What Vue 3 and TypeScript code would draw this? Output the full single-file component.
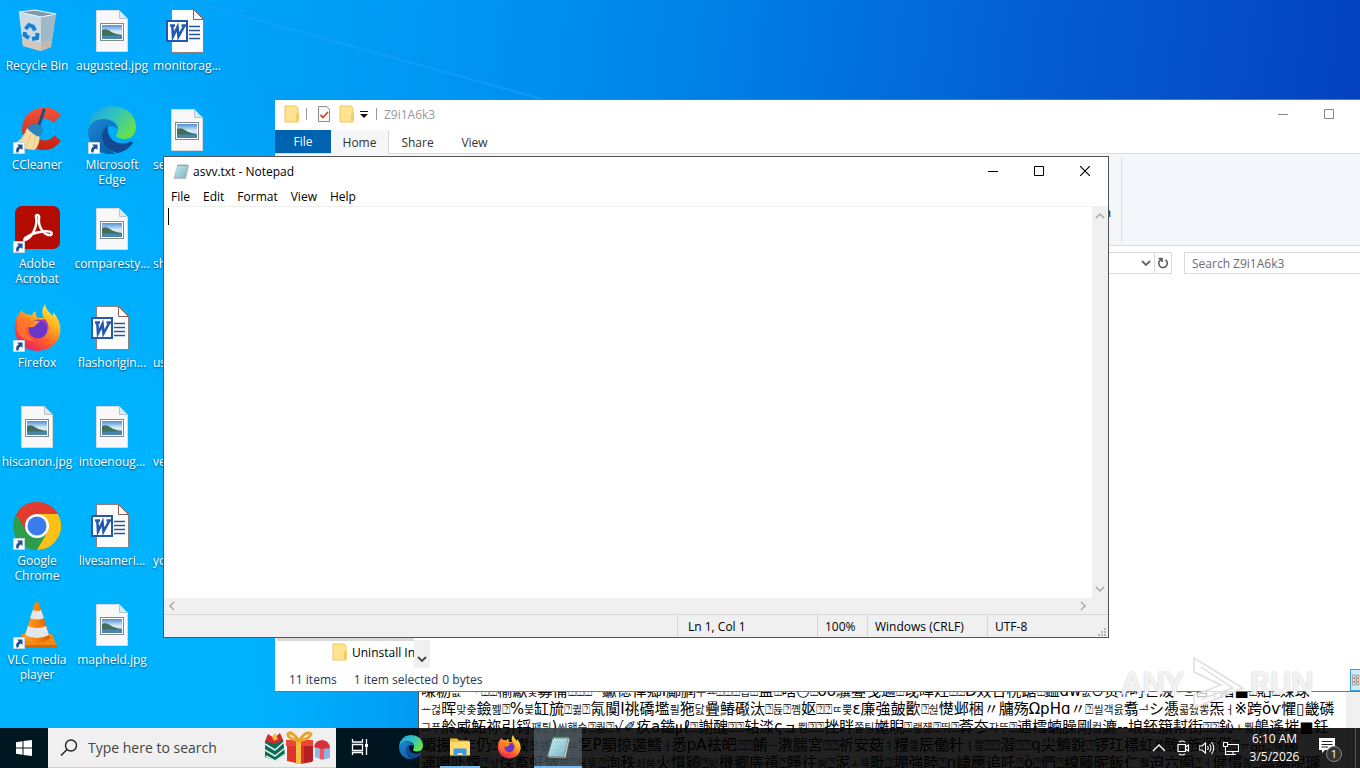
<script setup lang="ts">
import { ref } from 'vue'

interface Shortcut {
  label: string
  icon: string
  link?: boolean
  start?: boolean
}

const columns: Shortcut[][] = [
  [
    { label: 'Recycle Bin', icon: 'bin' },
    { label: 'CCleaner', icon: 'ccleaner', link: true },
    { label: 'Adobe Acrobat', icon: 'acrobat', link: true },
    { label: 'Firefox', icon: 'firefox', link: true },
    { label: 'hiscanon.jpg', icon: 'jpg' },
    { label: 'Google Chrome', icon: 'chrome', link: true },
    { label: 'VLC media player', icon: 'vlc', link: true },
  ],
  [
    { label: 'augusted.jpg', icon: 'jpg' },
    { label: 'Microsoft Edge', icon: 'edge', link: true },
    { label: 'comparesty...', icon: 'jpg' },
    { label: 'flashorigin...', icon: 'word' },
    { label: 'intoenoug...', icon: 'jpg' },
    { label: 'livesameri...', icon: 'word' },
    { label: 'mapheld.jpg', icon: 'jpg' },
  ],
  [
    { label: 'monitorag...', icon: 'word' },
    { label: 'se', icon: 'jpg', start: true },
    { label: 'sh', icon: '', start: true },
    { label: 'us', icon: '', start: true },
    { label: 've', icon: '', start: true },
    { label: 'yo', icon: '', start: true },
  ],
]

const lines: string[] = [
  '嗛粝럾ᄂㆍ⍰⍰櫤獻뭊募備⍰⍰⍰ᅡ钀憁律鄉I鄺膶쑤ㅛ⍰⍰⍰촙⍰盍⍰啥○⍰oo驥㬪戋邇⍰戉晫炷⍰⍰D效㕣梲踞⍰鎰ɑw쭚⊖贡쓔呵芒冹ㆍ으首ㅏ階■⍰貼⍰媒球',
  'ᅭ걶晖맞춪鐱쩶⍰%붗缸旈⍰큃⍰氝闃I祧礄壏픨狏닰疊鰆礟汰⍰듅⍰꼠妪⍰⍰ㄸ뿣ε廉強皷歠⍰쉲憷邺梱〃牗殇ΩpHɑ〃⍰씰객읈翥ᅺシ慿콟줤뽕炁ㅓ※跨ŏѵ懼▯畿磷',
  '그푸舲威鮖祢引锊쨰튄)씼햌슾⍰퀆⍰√✐疚a鑡㎕⍰謝醜⍰⍰轱渁ςュ뿸⍰⍰挫眫쫉팅嬔睨⍰랲쟮⍰뛰⍰葊冭쟈뚜⍰逋樰蝻臊剛컲瀌--埌鉟簱幇街⍰⍰鈊ㅗ뿳鵃遙墔■鈓',
  '嵋搌뚶乍仍⍰団搩쬬쐤⍰썟ㅛ乭P顒掠遾鱈ㅓ悉pA袪皅⍰⍰餚ㅡ漖腨宮⍰⍰祈安菇ㅕ糧쫊辰働籵ㅕ쫊⍰⍰潪⍰⍰q尖鱭銳⍰锣玒標虹쬴醜⍰旌莲僅⍰ㅠ品⍰훼娜',
  '運嗶卟慄⍰삯倸畜虷儌쬬⍰옹뚶⍰洵秩쇠쑴火懫穎⍰쐸機郷庤禧⍰睜往쑴⍰泥ㅗ뚝毗⍰堋強睦⍰n嶹應追吒⍰ò⍰們⍰線藤昵飯仁쮈迫六圇⍰ㅓ健慣쫊⍰藟畼唲瓏',
]

// Hangul and jamo fall back to a smaller face in the editor; unmapped code points show as boxes.
type Face = 'han' | 'small' | 'tofu'
function face(ch: string): Face {
  if (ch === '⍰') return 'tofu'
  return /[\u1100-\u11ff\u3130-\u318f\uac00-\ud7af]/.test(ch) ? 'small' : 'han'
}
function runs(line: string): { text: string; face: Face }[] {
  const out: { text: string; face: Face }[] = []
  for (const ch of line) {
    const f = face(ch)
    const last = out[out.length - 1]
    if (last && last.face === f) last.text += ch
    else out.push({ text: ch, face: f })
  }
  return out
}
const rendered = lines.map(runs)

const tasks = [
  { name: 'Microsoft Edge', icon: 'edge', state: '' },
  { name: 'File Explorer', icon: 'explorer', state: 'open' },
  { name: 'Firefox', icon: 'firefox', state: '' },
  { name: 'Notepad', icon: 'notepad', state: 'open active' },
]

const text = ref('')
</script>

<template>
  <svg class="defs" aria-hidden="true">
    <defs>
      <linearGradient id="g-edge1" x1="0" y1="0" x2="1" y2="0.6">
        <stop offset="0" stop-color="#1b9de2" /><stop offset=".5" stop-color="#2fc2c4" /><stop offset="1" stop-color="#66e04f" />
      </linearGradient>
      <linearGradient id="g-edge2" x1="0" y1="0" x2=".7" y2="1">
        <stop offset="0" stop-color="#1a8bd8" /><stop offset="1" stop-color="#0c59a4" />
      </linearGradient>
      <linearGradient id="g-fox" x1=".85" y1="0" x2=".2" y2="1">
        <stop offset="0" stop-color="#fff04a" /><stop offset=".35" stop-color="#ffb01f" /><stop offset=".65" stop-color="#ff5a2c" /><stop offset="1" stop-color="#e3176e" />
      </linearGradient>
      <linearGradient id="g-sky" x1="0" y1="0" x2="0" y2="1">
        <stop offset="0" stop-color="#4f8fd8" /><stop offset=".5" stop-color="#dceef6" /><stop offset="1" stop-color="#8fbbd0" />
      </linearGradient>
      <linearGradient id="g-bin" x1="0" y1="0" x2="1" y2="1">
        <stop offset="0" stop-color="#dcebf3" /><stop offset="1" stop-color="#9fbccd" />
      </linearGradient>
      <linearGradient id="g-cone" x1="0" y1="0" x2="1" y2="0">
        <stop offset="0" stop-color="#ffa22e" /><stop offset=".5" stop-color="#f98209" /><stop offset="1" stop-color="#d75c00" />
      </linearGradient>
      <linearGradient id="g-pad" x1="0" y1="0" x2="1" y2="1">
        <stop offset="0" stop-color="#d6f1f4" /><stop offset="1" stop-color="#6fb3c4" />
      </linearGradient>
      <linearGradient id="g-cc" x1="0" y1="0" x2="0" y2="1">
        <stop offset="0" stop-color="#f0553d" /><stop offset="1" stop-color="#c5200f" />
      </linearGradient>
    </defs>
    <symbol id="i-bin" viewBox="0 0 48 48">
      <path d="M6 5 43 7 38 40 28 44 10 39z" fill="url(#g-bin)" />
      <path d="M6 5 28 10 28 44 10 39z" fill="#c9dbe5" />
      <path d="M28 10 43 7 38 40 28 44z" fill="#a0b9c9" />
      <path d="M9 31 28 36 39 32 38 40 28 44 10 39z" fill="#d9b9a2" opacity=".6" />
      <path d="M6 5 22 3 43 7 28 10z" fill="#7f9bad" stroke="#eff6fa" stroke-width="1.200" />
      <g fill="none" stroke="#1c7fd6" stroke-width="4">
        <path d="M12.500 22 16 18l4 1.500 2 4" /><path d="M24.500 26l-.5 5-5 1" /><path d="M16 31l-4.500-3 .5-3" />
      </g>
    </symbol>
    <symbol id="i-jpg" viewBox="0 0 48 48">
      <path d="M8.500 3.500H31.500L39.500 11.500V44.500H8.500z" fill="#f8f8f8" stroke="#d5d9dc" />
      <path d="M31.500 3.500V11.500H39.500z" fill="#d9ecf6" stroke="#b7c4cc" />
      <rect x="12.500" y="16.500" width="23" height="17" fill="#fff" stroke="#7f8a91" />
      <rect x="14" y="18" width="20" height="14" fill="url(#g-sky)" />
      <path d="M14 23q4-2 8 1t12 4v1H14z" fill="#3f6f5a" />
      <path d="M14 28.500h20v3.500H14z" fill="#4a86ac" />
    </symbol>
    <symbol id="i-word" viewBox="0 0 48 48">
      <path d="M8.500 2.500H31.500L40.500 12.500V45.500H8.500z" fill="#fcfcfc" stroke="#8e7f7c" />
      <path d="M30.500 2.500V12.500H40.500z" fill="#fff" stroke="#8e5a52" />
      <path d="M26 19.500H37M26 23.500H37M26 27.500H37M26 31.500H37" stroke="#2b579a" stroke-width="1.400" />
      <rect x="4" y="14" width="20" height="20" fill="#fff" stroke="#2259b0" stroke-width="2" />
      <path d="M7 18.500H12M9.300 18.500 10 29.500 14.500 20 15.500 29.500 21.500 18.500M18.500 18.500H23" fill="none" stroke="#2259b0" stroke-width="2.600" />
    </symbol>
    <symbol id="i-ccleaner" viewBox="0 0 48 48">
      <path d="M48 9 41 17Q31 8 25 17 19 30 29 34 37 36 41 29L48 35Q40 45 29 44 12 42 9 25 9 6 26 2 39-1 48 9z" fill="url(#g-cc)" />
      <path d="M31 4 25 22" stroke="#1f4c79" stroke-width="3" stroke-linecap="round" />
      <path d="M14 22Q19 27 27 29 26 42 21 44 8 43 1 38 10 33 14 22z" fill="#f7dda4" />
      <path d="M14 25 6 38M18 28 13 41M23 29 20 43" stroke="#e3c084" />
      <path d="M14 22Q20 15 29 20 31 25 27 31 20 29 14 22z" fill="#2c82bf" />
    </symbol>
    <symbol id="i-edge" viewBox="0 0 48 48">
      <path d="M0 23Q2 2 23 0 46 1 48 20 48 32 37 33 28 33 28 29 33 22 27 16 18 10 8 15 3 18 0 23z" fill="url(#g-edge1)" />
      <path d="M0 24Q2 14 14 13 27 13 30 24 28 20 22 20 14 22 14 31 16 43 28 48 12 50 4 38 0 32 0 24z" fill="url(#g-edge2)" />
      <path d="M20 20Q13 24 14 32 17 45 30 47 39 45 45 37 44 34 39 37 27 39 22 31 19 26 20 20z" fill="#114a91" />
    </symbol>
    <symbol id="i-acrobat" viewBox="0 0 48 48">
      <rect x="2" y="1" width="45" height="43" rx="7" fill="#b30b00" />
      <path d="M12 35C19 33 25 21 23 12 22 9 27 9 26 14 25 24 33 31 38 30 41 27 35 25 27 27 20 28 15 31 12 33 11 35 11 36 12 35z" fill="none" stroke="#fff" stroke-width="2.400" />
    </symbol>
    <symbol id="i-firefox" viewBox="0 0 48 48">
      <path d="M4 12Q8 9 8 6 12 11 19 11 20 8 23 7 22 12 25 14H31Q27 7 32 0 33 6 40 12 40 9 40 8 49 18 47 29 44 45 25 47 6 46 2 29 1 19 4 12z" fill="url(#g-fox)" />
      <circle cx="25" cy="25" r="9.500" fill="#6b35c9" />
      <path d="M15 21Q18 15 27 17 24 20 22 22 17 25 15 21z" fill="#ff9329" />
      <path d="M4 13Q12 12 22 19 18 24 12 23 14 33 22 37 8 37 4 26z" fill="#ff7a2e" opacity=".75" />
      <path d="M26 16Q34 18 35 27 37 21 32 15z" fill="#b13bbd" />
    </symbol>
    <symbol id="i-chrome" viewBox="0 0 48 48">
      <circle cx="24" cy="24" r="24" fill="#2c9e4b" />
      <path d="M24 24 3.200 12A24 24 0 0 1 44.800 12z" fill="#e33b2e" />
      <path d="M24 12H44.800A24 24 0 0 1 24 48L34.400 30z" fill="#fbc116" />
      <path d="M3.200 12 13.600 30 24 24V12z" fill="#e33b2e" />
      <circle cx="24" cy="24" r="12" fill="#fff" /><circle cx="24" cy="24" r="9.500" fill="#3b7cec" />
    </symbol>
    <symbol id="i-vlc" viewBox="0 0 48 48">
      <path d="M9 33H39L44 45H4z" fill="#f18a14" /><path d="M4 44H44V47H4z" fill="#d46a05" />
      <path d="M22 2Q24 0 26 2L37 37Q31 42 24 42T11 37z" fill="url(#g-cone)" />
      <path d="M20 9Q24 11 28 9L31 17Q24 20 17 17zM15 25Q24 29 33 25L36 34Q24 40 12 34z" fill="#e4e7e8" />
    </symbol>
    <symbol id="i-explorer" viewBox="0 0 48 48">
      <path d="M4 7H18L22 11H43V40H4z" fill="#f4bc36" /><path d="M4 14H44V41H4z" fill="#ffdb70" />
      <path d="M11 27H37V42H29V36H19V42H11z" fill="#3b9ce5" />
    </symbol>
    <symbol id="i-notepad" viewBox="0 0 48 48">
      <path d="M14 5H45L36 43H3z" fill="url(#g-pad)" stroke="#4f7f8b" />
      <path d="M36 43 45 5 47 8 39 45H8L3 43z" fill="#e9e4d2" stroke="#77817e" />
      <path d="M15 3v5M20 3v5M25 3v5M30 3v5M35 3v5M40 3v5" stroke="#485" stroke-width="2" />
      <path d="M14 15H39M12 22H37M11 29H36" stroke="#8fcbd4" />
    </symbol>
    <symbol id="i-folder" viewBox="0 0 16 18">
      <path d="M1 1H12L14 3V17H1z" fill="#ffe391" stroke="#efc85c" /><path d="M12 17V9L15 8V15z" fill="#f3cd62" />
    </symbol>
  </svg>

  <main class="desktop">
    <svg class="ray" viewBox="0 0 560 104" aria-hidden="true"><path d="M200 4 560 104" stroke="#1ba2fb" stroke-width="2" opacity=".6" /></svg>

    <section class="shortcuts" aria-label="Desktop">
      <div v-for="(col, c) in columns" :key="c" class="column">
        <a v-for="item in col" :key="item.label" class="shortcut" :class="{ start: item.start }" href="#">
          <span class="art">
            <svg v-if="item.icon" class="big"><use :href="'#i-' + item.icon" /></svg>
            <svg v-if="item.link" class="arrow" viewBox="0 0 12 12">
              <path d="M.5.5H11.500V11.500H.5z" fill="#fff" stroke="#c5d6e2" />
              <path d="M4 2.500H9.500V8L8 6.500Q5.500 7 5.500 10.500H3.500Q2 6.500 5.800 4.300z" fill="#1d4f91" />
            </svg>
          </span>
          <span class="name">{{ item.label }}</span>
        </a>
      </div>
    </section>

    <section class="window raw" aria-label="Notepad">
      <div class="page">
        <p v-for="(line, i) in rendered" :key="i">
          <span v-for="(run, j) in line" :key="j" :class="run.face">{{ run.text }}</span>
        </p>
      </div>
    </section>

    <section class="window explorer" aria-label="Z9i1A6k3">
      <header class="caption">
        <svg class="folder"><use href="#i-folder" /></svg>
        <i class="bar"></i>
        <svg class="check" viewBox="0 0 14 16"><path d="M1.500.5H9.500L12.500 3.500V15.500H1.500z" fill="#fbfbfb" stroke="#8a8a8a" /><path d="M3.500 9 6 11.500 11 6" fill="none" stroke="#d0492c" stroke-width="1.800" /></svg>
        <svg class="folder"><use href="#i-folder" /></svg>
        <svg class="drop" viewBox="0 0 8 8"><path d="M0 1.500H8" stroke="#111" /><path d="M0 4H8L4 8z" fill="#111" /></svg>
        <i class="bar"></i>
        <span class="title">Z9i1A6k3</span>
        <button aria-label="Minimize"><svg viewBox="0 0 10 10"><path d="M0 5.500H10" stroke="#888" /></svg></button>
        <button aria-label="Maximize"><svg viewBox="0 0 10 10"><path d="M.5.5H9.500V9.500H.5z" fill="none" stroke="#888" /></svg></button>
      </header>
      <nav class="tabs">
        <button class="file">File</button><button class="home">Home</button><button>Share</button><button>View</button>
      </nav>
      <div class="ribbon"><div class="group"><span>Invert selection</span></div></div>
      <div class="address">
        <div class="path">
          <button aria-label="Previous locations"><svg viewBox="0 0 10 10"><path d="M1 3 5 7 9 3" fill="none" stroke="#666" stroke-width="1.800" /></svg></button>
          <button class="refresh" aria-label="Refresh"><svg viewBox="0 0 12 12"><path d="M4 2.500A4.300 4.300 0 1 0 8.500 2.800M1.500 1.500H5V5" fill="none" stroke="#555" stroke-width="1.500" /></svg></button>
        </div>
        <input class="find" type="search" aria-label="Search Z9i1A6k3" placeholder="Search Z9i1A6k3" />
      </div>
      <div class="body">
        <div class="tree">
          <div class="strip"></div>
          <div class="node"><svg class="folder"><use href="#i-folder" /></svg><span>Uninstall Information</span></div>
        </div>
        <button class="down" aria-label="Scroll down"><svg viewBox="0 0 10 10"><path d="M1 3 5 7 9 3" fill="none" stroke="#444" stroke-width="1.800" /></svg></button>
      </div>
      <footer class="counts">
        <span>11 items</span><span>1 item selected</span><span>0 bytes</span>
        <button aria-label="Details view"><svg viewBox="0 0 10 14"><path d="M1.500 1.500H4.500V4.500H1.500zM1.500 5.500H4.500V8.500H1.500zM1.500 9.500H4.500V12.500H1.500zM6 1.500H8.500V4.500H6zM6 5.500H8.500V8.500H6zM6 9.500H8.500V12.500H6z" fill="#fff" stroke="#a08a7c" /></svg></button>
      </footer>
    </section>

    <div class="watermark" aria-label="ANY RUN">
      <span>ANY</span>
      <svg viewBox="0 0 56 56"><path d="M5 3 54 33 5 53V40L32 30 5 17z" fill="rgba(255,255,255,.75)" stroke="#dedede" stroke-width="1.500" /><path d="M12 12 44 33 12 44" fill="none" stroke="#e2e2e2" stroke-width="1.500" /></svg>
      <span>RUN</span>
    </div>

    <section class="window notepad" aria-label="asvv.txt - Notepad">
      <header class="caption">
        <svg class="pad"><use href="#i-notepad" /></svg>
        <span class="title">asvv.txt - Notepad</span>
        <button aria-label="Minimize"><svg viewBox="0 0 10 10"><path d="M0 5.500H10" stroke="#000" /></svg></button>
        <button aria-label="Maximize"><svg viewBox="0 0 10 10"><path d="M.5.5H9.500V9.500H.5z" fill="none" stroke="#000" /></svg></button>
        <button aria-label="Close"><svg viewBox="0 0 10 10"><path d="M0 0 10 10M10 0 0 10" stroke="#000" stroke-width="1.200" /></svg></button>
      </header>
      <nav class="menu">
        <button>File</button><button>Edit</button><button>Format</button><button>View</button><button>Help</button>
      </nav>
      <div class="editor">
        <textarea v-model="text" aria-label="Text editor" spellcheck="false"></textarea>
        <i class="caret"></i>
        <div class="vbar">
          <svg viewBox="0 0 10 10"><path d="M1 7 5 3 9 7" fill="none" stroke="#aaa" stroke-width="1.500" /></svg>
          <svg viewBox="0 0 10 10"><path d="M1 3 5 7 9 3" fill="none" stroke="#aaa" stroke-width="1.500" /></svg>
        </div>
      </div>
      <div class="hbar">
        <svg viewBox="0 0 10 10"><path d="M7 1 3 5 7 9" fill="none" stroke="#aaa" stroke-width="1.500" /></svg>
        <svg viewBox="0 0 10 10"><path d="M3 1 7 5 3 9" fill="none" stroke="#aaa" stroke-width="1.500" /></svg>
      </div>
      <footer class="status">
        <span class="fill"></span><span class="pos">Ln 1, Col 1</span><span class="zoom">100%</span><span class="eol">Windows (CRLF)</span><span class="enc">UTF-8</span>
        <svg class="grip" viewBox="0 0 10 10"><path d="M7 1h2v2H7zM7 4h2v2H7zM7 7h2v2H7zM4 4h2v2H4zM4 7h2v2H4zM1 7h2v2H1z" fill="#b5b5b5" /></svg>
      </footer>
    </section>

    <footer class="taskbar">
      <button class="start-btn" aria-label="Start"><svg viewBox="0 0 16 16"><path d="M0 2.200 6.500 1.300V7.500H0zM7.500 1.100 16 0V7.500H7.500zM0 8.500H6.500V14.700L0 13.800zM7.500 8.500H16V16L7.500 14.900z" fill="#fff" /></svg></button>
      <div class="search">
        <svg class="lens" viewBox="0 0 18 18"><circle cx="11" cy="6.500" r="5.500" fill="none" stroke="#222" stroke-width="1.400" /><path d="M7 10.500 1 16.500" stroke="#222" stroke-width="1.400" /></svg>
        <input type="text" aria-label="Type here to search" placeholder="Type here to search" />
        <svg class="gifts" viewBox="0 0 68 34" aria-hidden="true">
          <path d="M2 10 20 8 22 24 12 30 2 26z" fill="#0d6b58" />
          <path d="M2 13 12 19 21 11M2 19 12 25 22 17M3 25 12 30 22 23" stroke="#d8f1e4" stroke-width="1.500" fill="none" />
          <path d="M2 10 5 3 11 7 17 2 20 9 12 13z" fill="#d42a2c" /><path d="M9 6 12 2 15 8 11 10z" fill="#f2b740" />
          <path d="M24 11H49V31L38 33 24 30z" fill="#de3429" /><path d="M41 11H50V30L41 32z" fill="#b41f24" /><path d="M23 9H50V15H23z" fill="#e94637" />
          <path d="M33 9H38V33H33z" fill="#f5bd45" />
          <path d="M36 10Q24 7 25 3 28-1 36 10 43-1 48 3 48 7 36 10z" fill="none" stroke="#eaa42d" stroke-width="3" />
          <path d="M52 16H67V27L59 29 52 26z" fill="#8fb5e8" /><path d="M57 16H61V28H57z" fill="#ee5960" />
          <path d="M51 16Q52 9 60 9 67 11 67 17L59 18z" fill="#d92e3b" />
        </svg>
      </div>
      <button class="task overview" aria-label="Task View"><svg class="view" viewBox="0 0 18 16"><path d="M1.500 0V3H11.500V0M1.500 5.500H11.500V11.500H1.500zM1.500 16V13.500H11.500V16M15.500 0V16" fill="none" stroke="#fff" stroke-width="1.300" /><path d="M14 5h3v3h-3z" fill="#fff" /></svg></button>
      <button v-for="t in tasks" :key="t.name" class="task" :class="t.state" :aria-label="t.name"><svg class="app"><use :href="'#i-' + t.icon" /></svg></button>
      <div class="tray">
        <button aria-label="Show hidden icons"><svg viewBox="0 0 16 16"><path d="M2 11 8 5 14 11" fill="none" stroke="#fff" stroke-width="1.400" /></svg></button>
        <button aria-label="Meet now"><svg viewBox="0 0 16 16"><path d="M3 4.500H10.500V11.500H3zM10.500 7 13.500 5V11L10.500 9M4 2Q7 0 10 2M4 14Q7 16 10 14" fill="none" stroke="#fff" stroke-width="1.200" /></svg></button>
        <button aria-label="Volume"><svg viewBox="0 0 16 16"><path d="M0 6H3L6.500 3V13L3 10H0zM8.500 6Q10 8 8.500 10M10.500 4Q13.500 8 10.500 12M12.500 2Q17 8 12.500 14" fill="none" stroke="#fff" stroke-width="1.100" /></svg></button>
        <button aria-label="Network"><svg viewBox="0 0 16 16"><path d="M4.500 4.500H15.500V11.500H3.500M10 11.500V14M6 14.500H13M.5 2.500H4.500V6.500H.5zM2.500 6.500V14.500H6" fill="none" stroke="#fff" stroke-width="1.100" /></svg></button>
        <button class="clock"><span>6:10 AM</span><span>3/5/2026</span></button>
        <button class="notes" aria-label="1 new notification"><svg viewBox="0 0 26 24"><path d="M1 2H17V14H7L4 17V14H1z" fill="#fff" /><path d="M3.500 5.500H14.500M3.500 8.500H14.500M3.500 11H10" stroke="#222" /></svg><span class="badge">1</span></button>
        <button class="peek" aria-label="Show desktop"></button>
      </div>
    </footer>
  </main>
</template>

<style>
body { overflow: hidden; }
</style>

<style scoped>
* { box-sizing: border-box; }
.defs { position: absolute; width: 0; height: 0; }
.desktop {
  position: relative; height: 100vh; overflow: hidden;
  font: 12px/15px "Open Sans", "Noto Sans", sans-serif; color: #000;
  background:
    radial-gradient(ellipse 480px 820px at 0 100%, #00b3ff 50%, rgba(0, 176, 255, 0) 100%),
    linear-gradient(97deg, #00a8fd 0%, #00a6fb 12%, #009ff6 22%, #008dec 40%, #0079e2 54%, #0460d2 70%, #044bc5 87%, #043bb9 100%);
}
.ray { position: absolute; left: 0; top: 0; width: 560px; height: 104px; }
button { border: 0; padding: 0; margin: 0; background: none; color: inherit; font: inherit; }
input, textarea { border: 0; padding: 0; margin: 0; font: inherit; outline: 0; background: none; }
svg { display: block; flex: none; }

.shortcuts { display: flex; height: 100%; }
.column { width: 75px; }
.shortcut { display: flex; flex-direction: column; align-items: center; height: 99px; padding: 7px 1px 0 0; color: #fff; text-decoration: none; text-align: center; text-shadow: 0 1px 2px rgba(0, 0, 0, 0.6); }
.art { position: relative; width: 48px; height: 48px; margin-bottom: 3px; }
.big { width: 48px; height: 48px; }
.arrow { position: absolute; left: 0; bottom: 0; width: 12px; height: 12px; }
.name { width: 68px; display: flex; justify-content: center; }
.start .name { justify-content: flex-start; }

.window { position: absolute; background: #fff; }
.raw { left: 418px; right: 0; top: 640px; bottom: 0; border-left: 1px solid #555; }
.page { height: 100%; margin-right: 14px; padding: 42px 2px 0; overflow: hidden; box-shadow: 14px 0 0 #f0f0f0; }
.page p { margin: 0; height: 18px; white-space: nowrap; font: 15px/18px "DejaVu Sans", "Noto Sans CJK SC", "Noto Sans CJK KR", sans-serif; }
.page .small { font-size: 11px; color: #222; }
.page .tofu { font-size: 14px; color: #333; }

.explorer { left: 275px; right: 0; top: 99px; height: 593px; display: flex; flex-direction: column; border: 1px solid #4b7fa8; border-width: 1px 0; }
.caption { display: flex; align-items: center; flex: none; height: 30px; padding-bottom: 2px; }
.caption .title { flex: 1; }
.caption button { width: 46px; height: 28px; display: grid; place-items: center; }
.caption button svg { width: 10px; height: 10px; }
.explorer .caption { padding: 0 8px 2px 9px; color: #999; }
.folder { width: 16px; height: 18px; }
.bar { width: 1px; height: 12px; background: #999; margin: 0 10px 0 6px; }
.check { width: 14px; height: 16px; margin-right: 8px; }
.drop { width: 8px; height: 8px; margin-left: 5px; }
.drop + .bar { margin: 0 7px 0 8px; }
.tabs { display: flex; flex: none; height: 24px; border-bottom: 1px solid #dadbdc; color: #333; }
.tabs button { width: 57px; height: 24px; }
.tabs .file { width: 56px; height: 23px; background: #0063b1; color: #fff; }
.tabs .home { width: 58px; background: #f5f6f7; border-right: 1px solid #dadbdc; }
.ribbon { display: flex; flex: none; height: 92px; padding: 3px 0; background: #f5f6f7; border-bottom: 1px solid #dadbdc; }
.ribbon::after { content: ""; flex: 1; background: #f3f7fb; }
.group { width: 847px; display: flex; justify-content: flex-end; align-items: center; padding: 26px 10px 0 0; border-right: 1px solid #d5e0ea; }
.address { display: flex; flex: none; height: 34px; padding-top: 6px; }
.path { width: 897px; height: 22px; display: flex; justify-content: flex-end; border: 1px solid #d9d9d9; }
.path button { width: 17px; display: grid; place-items: center; }
.path button svg { width: 10px; height: 10px; }
.path .refresh { border-left: 1px solid #d9d9d9; }
.path .refresh svg { width: 12px; height: 12px; }
.find { flex: 1; min-width: 0; height: 22px; margin-left: 12px; padding-left: 7px; border: 1px solid #d9d9d9; border-right: 0; }
.find::placeholder { color: #6d6d6d; opacity: 1; }
.body { flex: 1; display: flex; align-items: flex-end; }
.tree { width: 139px; height: 30px; padding-left: 2px; overflow: hidden; }
.strip { height: 3px; background: #d9d9d9; }
.node { display: flex; align-items: center; gap: 4px; height: 22px; padding-left: 55px; white-space: nowrap; }
.down { width: 16px; height: 28px; padding-top: 10px; background: #f0f0f0; display: grid; place-items: center; }
.down svg { width: 10px; height: 10px; }
.counts { display: flex; align-items: center; flex: none; height: 23px; padding-left: 14px; color: #1e395b; }
.counts span + span { margin-left: 17px; }
.counts span + span + span { margin-left: 4px; }
.counts button { width: 10px; height: 22px; margin-left: auto; background: #cfeafa; border: 1px solid #3aa0dc; border-right: 0; display: grid; place-items: center; }
.counts svg { width: 9px; height: 14px; }

.watermark { position: absolute; left: 1121px; top: 655px; display: flex; align-items: center; gap: 3px; color: rgba(255, 255, 255, 0.8); font: 500 32px/40px Roboto, sans-serif; text-shadow: 0 0 2px #bbb; height: 56px; }
.watermark svg { width: 60px; height: 56px; }

.notepad { left: 163px; top: 156px; width: 946px; height: 482px; border: 1px solid #555; display: flex; flex-direction: column; }
.notepad .caption { padding-left: 9px; }
.pad { width: 16px; height: 17px; margin-right: 4px; }
.menu { display: flex; flex: none; height: 20px; padding-left: 7px; gap: 13px; border-bottom: 1px solid #f0f0f0; }
.editor { position: relative; flex: 1; min-height: 0; display: flex; }
.editor textarea { flex: 1; resize: none; padding: 2px 4px; }
.caret { position: absolute; left: 4px; top: 1px; width: 1px; height: 17px; background: #000; }
.vbar { width: 16px; display: flex; flex-direction: column; justify-content: space-between; align-items: center; padding: 4px 0; background: #f0f0f0; }
.vbar svg, .hbar svg { width: 10px; height: 10px; }
.hbar { flex: none; height: 16px; display: flex; justify-content: space-between; align-items: center; padding: 0 20px 0 3px; background: #f0f0f0; }
.status { position: relative; flex: none; height: 23px; display: flex; background: #f0f0f0; border-top: 1px solid #d7d7d7; line-height: 24px; }
.status span { border-left: 1px solid #d7d7d7; padding-left: 7px; height: 22px; }
.status .fill { flex: 1; border: 0; padding: 0; }
.status .pos { width: 140px; padding-left: 10px; }
.status .zoom { width: 50px; }
.status .eol { width: 120px; }
.status .enc { width: 121px; }
.grip { position: absolute; right: 1px; bottom: 0; width: 10px; height: 10px; }

.taskbar { position: absolute; left: 0; right: 0; bottom: 0; height: 40px; display: flex; background: rgba(0, 0, 0, 0.87); color: #fff; }
.start-btn, .task { width: 48px; height: 40px; display: grid; place-items: center; }
.start-btn svg { width: 16px; height: 16px; }
.search { display: flex; align-items: center; width: 288px; height: 40px; padding: 0 5px 0 12px; background: #f0f0f0; border: 1px solid #d0d0d0; border-width: 0 0 1px; }
.lens { width: 18px; height: 18px; margin-right: 10px; }
.search input { flex: 1; min-width: 0; font-size: 14px; line-height: 20px; }
.search input::placeholder { color: #444; opacity: 1; }
.gifts { width: 68px; height: 34px; }
.task { margin-right: 1px; border-bottom: 2px solid transparent; }
.overview { margin-right: 3px; }
.view { width: 18px; height: 16px; }
.app { width: 24px; height: 24px; }
.open { background: linear-gradient(#76b9ed, #76b9ed) bottom / 40px 2px no-repeat; background-origin: border-box; background-clip: border-box; }
.active { background: rgba(160, 190, 210, 0.3); border-bottom-color: #76b9ed; }
.tray { margin-left: auto; display: flex; }
.tray button { width: 24px; display: grid; place-items: center; }
.tray svg { width: 16px; height: 16px; }
.tray .clock { width: 63px; align-content: center; line-height: 18px; }
.tray .notes { position: relative; width: 49px; }
.tray .notes svg { width: 26px; height: 24px; }
.badge { position: absolute; left: 20px; top: 18px; width: 16px; height: 16px; border: 1px solid #888; border-radius: 50%; background: #333; font-size: 11px; line-height: 14px; }
.tray .peek { width: 5px; border-left: 1px solid #555; }
</style>
